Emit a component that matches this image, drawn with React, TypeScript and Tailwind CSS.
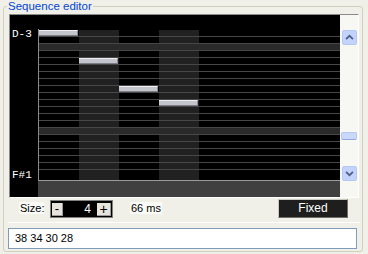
import React from "react";

const ROWS = Array.from({ length: 21 }, (_, i) => i);
const NOTE_ROW = [0, 4, 8, 10];

function Chevron({ up }: { up: boolean }) {
  return (
    <svg width="15" height="13" viewBox="0 0 15 13" className="block">
      <polyline
        points={up ? "3.5,8.5 7.5,4.5 11.5,8.5" : "3.5,4.5 7.5,8.5 11.5,4.5"}
        fill="none"
        stroke="#4D6185"
        strokeWidth="2"
      />
    </svg>
  );
}

function Row({ i }: { i: number }) {
  const isC = i === 2 || i === 14;
  const last = i === 20;
  return (
    <div className={last ? "flex h-[10px]" : "flex h-[7px] border-b border-[#474747]"}>
      {[0, 1, 2, 3].map((c) => (
        <div
          key={c}
          className={
            isC
              ? "w-[40px] h-full bg-[#2a2a2a]"
              : c % 2 === 1
              ? "w-[40px] h-full bg-[#212121]"
              : "w-[40px] h-full bg-black"
          }
        >
          {NOTE_ROW[c] === i && (
            <div className="h-[6px] w-[39px] bg-[#c4c4cc] border-t border-t-[#efeff3] border-b border-b-[#7c7c84] border-r border-r-[#8a8a92]" />
          )}
        </div>
      ))}
      <div className={isC ? "flex-1 h-full bg-[#2a2a2a]" : "flex-1 h-full bg-black"} />
    </div>
  );
}

export default function App() {
  return (
    <div
      className="w-[368px] h-[254px] bg-[#F0EFE8] pt-[6px] pl-[3px]"
      style={{ fontFamily: '"Liberation Sans", Arial, sans-serif' }}
    >
      <div className="relative w-[360px] h-[246px] border border-[#D0D0BF] rounded-[3px] flex flex-col">
        <div className="absolute left-[3px] top-[-7px] px-[1px] bg-[#F0EFE8] text-[11.5px] leading-[13px] text-[#0046D5]">
          Sequence editor
        </div>

        {/* frame */}
        <div className="ml-[5px] mt-[7px] w-[350px] h-[184px] flex border-t border-l border-t-[#8a8a8a] border-l-[#8a8a8a] border-r border-b border-r-[#ffffff] border-b-[#ffffff]">
          {/* label column */}
          <div
            className="w-[28px] h-full bg-black text-white text-[11px] leading-[10px] flex flex-col justify-between pl-[2px] pt-[14px] pb-[17px]"
            style={{ fontFamily: '"Liberation Mono", "DejaVu Sans Mono", monospace' }}
          >
            <div>D-3</div>
            <div>F#1</div>
          </div>
          {/* grid column */}
          <div className="w-[302px] h-full flex flex-col bg-black">
            <div className="h-[14px]" />
            <div className="border-l border-[#8a8a8a]">
              <div className="h-[1px] bg-black" />
              {ROWS.map((i) => (
                <Row key={i} i={i} />
              ))}
            </div>
            <div className="h-[1px] bg-[#9a9a9a]" />
            <div className="h-[16px] bg-[#404040]" />
          </div>
          {/* scrollbar */}
          <div className="w-[18px] h-full bg-[#F7F7F4] flex flex-col pt-[15px] pb-[16px]">
            <div className="ml-[2px] w-[15px] h-[15px] rounded-[2px] border border-[#B4C8F6] bg-[#C3D3FC] flex items-center justify-center">
              <Chevron up />
            </div>
            <div className="h-[87px]" />
            <div className="ml-[1px] w-[16px] h-[8px] rounded-[2px] border border-[#B4C8F6] border-b-[#8FA8E0] bg-[#CAD8FC]" />
            <div className="h-[26px]" />
            <div className="ml-[2px] w-[15px] h-[15px] rounded-[2px] border border-[#B4C8F6] bg-[#C3D3FC] flex items-center justify-center">
              <Chevron up={false} />
            </div>
          </div>
        </div>

        {/* controls row */}
        <div className="h-[20px] flex items-center pl-[15px] text-[11px] text-black">
          <div className="w-[25px] h-[12px] bg-[#FAFAF7] leading-[12px] pl-[1px]">Size:</div>
          <div className="ml-[6px] w-[63px] h-[18px] mt-[2px] border border-[#808080] bg-black flex items-center px-[1px]">
            <div className="w-[11px] h-[13px] bg-[#E6E4DC] border-r border-b border-[#9a9a9a] text-black text-[13px] leading-[11px] flex justify-center">
              -
            </div>
            <div className="flex-1 text-white text-[12px] text-right pr-[6px] leading-[13px]">4</div>
            <div className="w-[14px] h-[13px] bg-[#E6E4DC] border-r border-b border-[#9a9a9a] text-black text-[14px] leading-[12px] flex justify-center">
              +
            </div>
          </div>
          <div className="ml-[17px] h-[12px] bg-[#FAFAF7] leading-[12px] px-[1px]">66 ms</div>
          <div className="ml-auto mr-[14px] w-[70px] h-[19px] border border-t-[#c8c8c0] border-l-[#c8c8c0] border-r-[#6f6f68] border-b-[#6f6f68] bg-[#1E1E1E] text-white text-[12px] leading-[17px] text-center">
            Fixed
          </div>
        </div>

        <div className="mt-[4px] ml-[4px] w-[352px] h-[1px] bg-white" />

        <div className="mt-[5px] ml-[4px] w-[349px] h-[21px] border border-[#7F9DB9] bg-white text-[11px] leading-[19px] pl-[6px] text-black">
          38 34 30 28
        </div>
      </div>
    </div>
  );
}
